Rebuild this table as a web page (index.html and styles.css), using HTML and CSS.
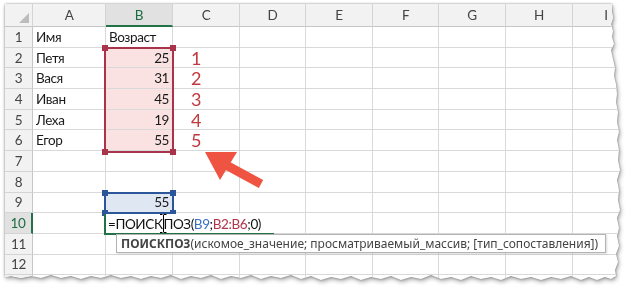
FILE: index.html
```html
<!DOCTYPE html>
<html lang="ru">
<head>
<meta charset="utf-8">
<title>ПОИСКПОЗ</title>
<link rel="stylesheet" href="styles.css">
</head>
<body>
<div class="page">
  <div class="frame">
    <div class="sheet">
      <div class="row head"><div class="corner"></div><div>A</div><div class="hd-active">B</div><div>C</div><div>D</div><div>E</div><div>F</div><div>G</div><div>H</div><div>I</div></div>
      <div class="row"><div class="rh">1</div><div>Имя</div><div>Возраст</div><div></div><div></div><div></div><div></div><div></div><div></div><div></div></div>
      <div class="row"><div class="rh">2</div><div>Петя</div><div class="num pink">25</div><div class="mark">1</div><div></div><div></div><div></div><div></div><div></div><div></div></div>
      <div class="row"><div class="rh">3</div><div>Вася</div><div class="num pink">31</div><div class="mark">2</div><div></div><div></div><div></div><div></div><div></div><div></div></div>
      <div class="row"><div class="rh">4</div><div>Иван</div><div class="num pink">45</div><div class="mark">3</div><div></div><div></div><div></div><div></div><div></div><div></div></div>
      <div class="row"><div class="rh">5</div><div>Леха</div><div class="num pink">19</div><div class="mark">4</div><div></div><div></div><div></div><div></div><div></div><div></div></div>
      <div class="row"><div class="rh">6</div><div>Егор</div><div class="num pink">55</div><div class="mark">5</div><div></div><div></div><div></div><div></div><div></div><div></div></div>
      <div class="row"><div class="rh">7</div><div></div><div></div><div></div><div></div><div></div><div></div><div></div><div></div><div></div></div>
      <div class="row"><div class="rh">8</div><div></div><div></div><div></div><div></div><div></div><div></div><div></div><div></div><div></div></div>
      <div class="row"><div class="rh">9</div><div></div><div class="num blue">55</div><div></div><div></div><div></div><div></div><div></div><div></div><div></div></div>
      <div class="row"><div class="rh rh-active">10</div><div></div><div></div><div></div><div></div><div></div><div></div><div></div><div></div><div></div></div>
      <div class="row"><div class="rh">11</div><div></div><div></div><div></div><div></div><div></div><div></div><div></div><div></div><div></div></div>
      <div class="row"><div class="rh">12</div><div></div><div></div><div></div><div></div><div></div><div></div><div></div><div></div><div></div></div>
      <div class="row"><div class="rh"></div><div></div><div></div><div></div><div></div><div></div><div></div><div></div><div></div><div></div></div>

      <div class="sel sel-red"><i class="h tl"></i><i class="h tr"></i><i class="h bl"></i><i class="h br"></i></div>
      <div class="sel sel-blue"><i class="h tl"></i><i class="h tr"></i><i class="h bl"></i><i class="h br"></i></div>
      <div class="edit">=ПОИСК<svg class="ibeam" width="9" height="21" viewBox="0 0 9 21"><path d="M1 1.5h2.5M5 1.5h2.5M4.5 1.5v18M1 19.5h2.5M5 19.5h2.5" stroke="#000" stroke-width="1" fill="none"/></svg>ПОЗ(<span class="ref-b">B9</span>;<span class="ref-r">B2:B6</span>;0)</div>
      <div class="tip"><b>ПОИСКПОЗ</b>(искомое_значение; просматриваемый_массив; [тип_сопоставления])</div>
      <svg class="arrow" width="70" height="45" viewBox="0 0 70 45"><line x1="26" y1="17" x2="61" y2="36" stroke="#ef5443" stroke-width="9"/><polygon points="5,4 37,4 20,32" fill="#ef5443"/></svg>
    </div>
  </div>
</div>
</body>
</html>
```
FILE: styles.css
```css
* { box-sizing: border-box; margin: 0; padding: 0; }
html, body { background: #fff; }
body { font-family: "Lato", "Liberation Sans", sans-serif; }

.page { width: 626px; height: 291px; padding: 4px 0 0 5px; overflow: hidden; }
.frame {
  width: 616px; height: 282px;
  filter: drop-shadow(0 0 1px rgba(0,0,0,.35)) drop-shadow(1px 2px 2px rgba(0,0,0,.35));
}
.sheet {
  position: relative; width: 616px; height: 282px; background: #fff; overflow: hidden;
  clip-path: polygon(0px 0px, 607px 0px, 607px 8px, 608px 14px, 606px 20px, 608px 27px, 607px 33px, 609px 40px, 606px 46px, 608px 55px, 610px 64px, 609px 72px, 611px 80px, 612px 90px, 611px 98px, 613px 108px, 612px 118px, 614px 128px, 612px 136px, 614px 146px, 613px 156px, 615px 166px, 612px 176px, 614px 186px, 613px 196px, 615px 206px, 612px 214px, 614px 224px, 612px 232px, 614px 242px, 611px 250px, 613px 258px, 610px 266px, 611px 272px, 606px 275px, 600px 273px, 592px 276px, 584px 273px, 576px 276px, 566px 272px, 556px 275px, 546px 273px, 536px 276px, 526px 273px, 516px 275px, 506px 272px, 496px 276px, 486px 273px, 476px 275px, 466px 272px, 456px 276px, 446px 273px, 436px 275px, 426px 271px, 416px 275px, 406px 273px, 396px 276px, 386px 272px, 376px 275px, 366px 273px, 356px 276px, 346px 272px, 336px 275px, 326px 273px, 316px 276px, 306px 272px, 296px 275px, 286px 271px, 276px 274px, 266px 272px, 256px 275px, 246px 271px, 236px 274px, 226px 272px, 216px 275px, 206px 271px, 196px 274px, 186px 272px, 176px 275px, 166px 271px, 156px 274px, 146px 272px, 136px 275px, 126px 272px, 116px 274px, 106px 271px, 96px 274px, 86px 272px, 76px 275px, 66px 272px, 56px 274px, 46px 271px, 36px 274px, 26px 272px, 16px 274px, 6px 272px, 0px 273px);
}

.row {
  display: grid;
  grid-template-columns: 28px 73px 67px 67px 66px 67px 66px 67px 67px 67px;
  height: 20.7px;
}
.row > div {
  display: flex; align-items: center;
  padding: 0 3px;
  border-right: 1px solid #d9d9d9;
  border-bottom: 1px solid #d9d9d9;
  font-size: 13.5px; letter-spacing: -0.4px; color: #1a1a1a;
  white-space: nowrap; overflow: hidden;
}
.row.head { height: 23px; }
.row.head > div {
  background: #f2f2f2; justify-content: center; color: #444;
  border-bottom-color: #c6c6c6; border-right-color: #d4d4d4;
}
.row.head > .hd-active {
  background: #e1e1e1; color: #1f6b40;
  border-bottom: 2px solid #217346;
}
.row > .rh {
  background: #f2f2f2; justify-content: center; color: #444;
  border-right-color: #c6c6c6; border-bottom-color: #d4d4d4;
}
.row > .rh-active {
  background: #e1e1e1; color: #1f6b40;
  border-right: 2px solid #217346;
}
.corner { position: relative; }
.corner::after {
  content: ""; position: absolute; right: 3px; bottom: 3px;
  border-left: 10px solid transparent; border-bottom: 10px solid #bcbcbc;
}
.row > .num { justify-content: flex-end; }
.row > .pink { background: #fae2e3; }
.row > .blue { background: #dfe7f3; }
.row > .mark {
  color: #c2393d; font-size: 18px; font-weight: 400; line-height: 1;
  letter-spacing: 0; padding-left: 18px; overflow: visible;
}

.sel { position: absolute; left: 99px; width: 70px; border: 2px solid; }
.sel-red { top: 42.7px; height: 106.5px; border-color: #a8334a; color: #a8334a; }
.sel-blue { top: 187.6px; height: 22.7px; border-color: #2b579a; color: #2b579a; }
.h { position: absolute; width: 6px; height: 6px; background: currentColor; }
.h.tl { left: -4px; top: -4px; }
.h.tr { right: -4px; top: -4px; }
.h.bl { left: -4px; bottom: -4px; }
.h.br { right: -4px; bottom: -4px; }

.edit {
  position: absolute; left: 99px; top: 210.3px; width: 170px; height: 20.7px;
  background: #fff; border-left: 2px solid #217346; border-bottom: 2px solid #217346;
  display: flex; align-items: center; padding-left: 2px;
  font-size: 13.5px; letter-spacing: -0.4px; color: #111; white-space: nowrap;
}
.ibeam { flex: none; margin: 0 -4px 0 -4px; position: relative; top: 0; }
.ref-b { color: #3b6fc2; }
.ref-r { color: #b0344a; }

.tip {
  position: absolute; left: 111px; top: 230px; width: 490px; height: 19px;
  background: #fff; border: 1px solid #b3b3b3;
  box-shadow: 1px 1px 2px rgba(0,0,0,.15);
  display: flex; align-items: center; padding-left: 4px;
  font-family: "Noto Sans", "Liberation Sans", sans-serif; font-size: 12px; color: #444;
  white-space: nowrap;
}
.tip b { font-weight: 700; color: #444; }

.arrow { position: absolute; left: 195px; top: 144px; }
```
